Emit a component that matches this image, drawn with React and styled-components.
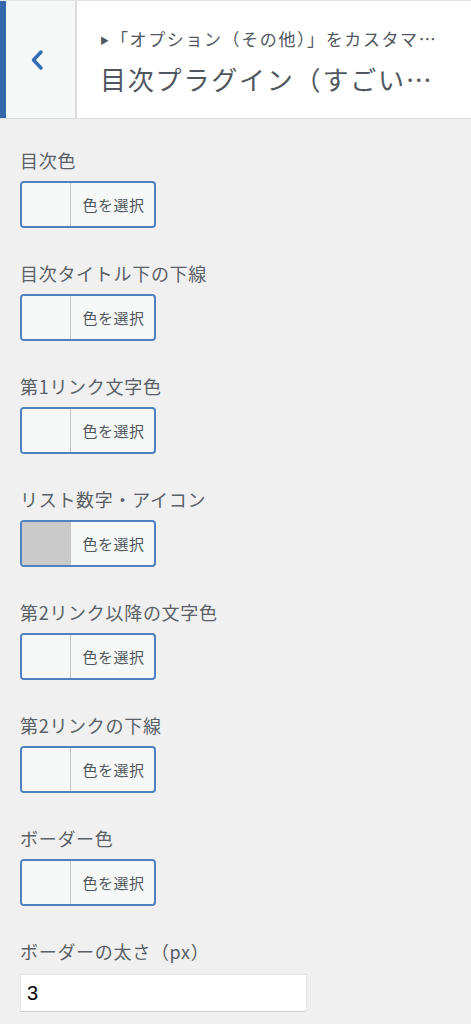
import React from 'react';
import styled, { createGlobalStyle } from 'styled-components';

const GlobalStyle = createGlobalStyle`
  html, body {
    margin: 0;
    padding: 0;
    background: #f0f0f1;
  }
  body {
    font-family: "Noto Sans CJK JP", "Noto Sans", sans-serif;
    color: #50575e;
  }
`;

const Panel = styled.div`
  width: 471px;
  min-height: 1024px;
  background: #f0f0f1;
`;

const Header = styled.div`
  display: flex;
  height: 119px;
  background: #fff;
  border-top: 1px solid #e2e4e7;
  border-bottom: 1px solid #dcdcde;
  box-sizing: border-box;
`;

const Accent = styled.div`
  width: 6px;
  background: #3468ab;
`;

const BackButton = styled.button`
  width: 71px;
  border: none;
  border-right: 2px solid #dcdcde;
  background: #f6f7f7;
  display: flex;
  align-items: center;
  justify-content: center;
  padding: 0 7px 0 0;
  cursor: pointer;
`;

const TitleBox = styled.div`
  flex: 1;
  min-width: 0;
  padding: 24px 26px 0 23px;
`;

const Breadcrumb = styled.div`
  font-size: 17px;
  letter-spacing: 1.6px;
  line-height: 28px;
  color: #50575e;
  white-space: nowrap;
  overflow: hidden;
  text-overflow: ellipsis;
`;

const Arrow = styled.span`
  font-size: 9px;
  letter-spacing: 0;
  margin-right: 2px;
  vertical-align: 2px;
`;

const Title = styled.h3`
  margin: 4px 0 0;
  font-size: 26px;
  font-weight: 400;
  letter-spacing: 1.8px;
  line-height: 40px;
  color: #50575e;
  white-space: nowrap;
  overflow: hidden;
  text-overflow: ellipsis;
`;

const Content = styled.div`
  padding: 29px 20px 20px;
`;

const Field = styled.div`
  margin-bottom: 33px;
`;

const Label = styled.div`
  font-size: 18px;
  letter-spacing: 0.7px;
  line-height: 24px;
  color: #5a6066;
  margin-bottom: ${p => p.$gap || 9}px;
`;

const ColorButton = styled.button`
  display: flex;
  width: 136px;
  height: 47px;
  padding: 0;
  border: 2px solid #4f80c2;
  border-radius: 4px;
  background: #f6f7f7;
  overflow: hidden;
  cursor: pointer;
  box-sizing: border-box;
`;

const Swatch = styled.span`
  width: 48px;
  height: 100%;
  background: ${p => p.$color || '#f6f7f7'};
  border-right: 1.5px solid #c3c4c7;
`;

const ButtonText = styled.span`
  flex: 1;
  display: flex;
  align-items: center;
  justify-content: center;
  font-family: "Noto Sans CJK JP", sans-serif;
  font-size: 15px;
  letter-spacing: 0.5px;
  color: #50575e;
  padding-left: 2px;
`;

const NumberInput = styled.input`
  display: block;
  width: 287px;
  height: 38px;
  box-sizing: border-box;
  border: 1px solid #e4e4e4;
  border-bottom-color: #d0d0d0;
  background: #fff;
  font-family: "Liberation Sans", Arial, sans-serif;
  font-size: 20px;
  color: #000;
  padding: 0 6px;
  outline: none;
`;

const colorFields = [
  { label: '目次色' },
  { label: '目次タイトル下の下線' },
  { label: '第1リンク文字色' },
  { label: 'リスト数字・アイコン', color: '#cacaca' },
  { label: '第2リンク以降の文字色' },
  { label: '第2リンクの下線' },
  { label: 'ボーダー色' },
];

const Chevron = () => (
  <svg width="14" height="22" viewBox="0 0 14 22">
    <path d="M11 3 L3.5 11 L11 19" fill="none" stroke="#2f6db0" strokeWidth="3.4" strokeLinecap="round" strokeLinejoin="round" />
  </svg>
);

const App = () => {
  return (
    <>
      <GlobalStyle />
      <Panel>
        <Header>
          <Accent />
          <BackButton aria-label="戻る"><Chevron /></BackButton>
          <TitleBox>
            <Breadcrumb><Arrow>▶</Arrow>「オプション（その他）」をカスタマイズ中</Breadcrumb>
            <Title>目次プラグイン（すごいもくじ）</Title>
          </TitleBox>
        </Header>
        <Content>
          {colorFields.map(f => (
            <Field key={f.label}>
              <Label>{f.label}</Label>
              <ColorButton>
                <Swatch $color={f.color} />
                <ButtonText>色を選択</ButtonText>
              </ColorButton>
            </Field>
          ))}
          <Field>
            <Label $gap={11}>ボーダーの太さ（px）</Label>
            <NumberInput type="number" defaultValue="3" />
          </Field>
        </Content>
      </Panel>
    </>
  );
};

export default App;
